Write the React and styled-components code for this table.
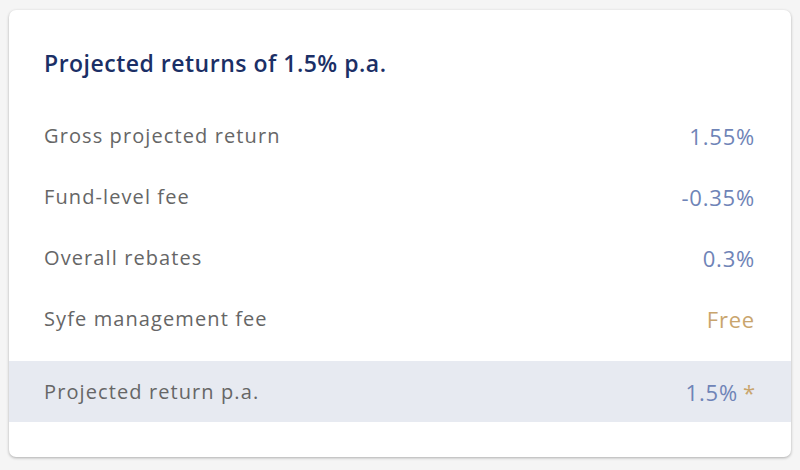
import styled, { createGlobalStyle } from "styled-components";

const GlobalStyle = createGlobalStyle`
  body {
    margin: 0;
    background: #f5f5f5;
    font-family: "Open Sans", "Liberation Sans", sans-serif;
  }
`;

const Page = styled.div`
  padding: 10px 9px 14px;
`;

const Card = styled.div`
  background: #ffffff;
  border-radius: 7px;
  box-shadow: 0 1px 3px rgba(0, 0, 0, 0.3);
  padding: 39px 0 35px;
`;

const Title = styled.h2`
  margin: 0 0 28px;
  padding: 0 35px;
  font-size: 23px;
  font-weight: 600;
  letter-spacing: 0.5px;
  line-height: 28px;
  color: #1b2f66;
`;

const Row = styled.div`
  display: flex;
  align-items: center;
  justify-content: space-between;
  height: 61px;
  padding: 0 36px 0 35px;
  background: ${(p) => (p.$highlight ? "#e7eaf1" : "transparent")};
  margin-top: ${(p) => (p.$highlight ? "12px" : "0")};
`;

const Label = styled.span`
  font-size: 20px;
  letter-spacing: 1.1px;
  color: #666666;
`;

const Value = styled.span`
  font-size: 22px;
  letter-spacing: 0.8px;
  color: ${(p) => (p.$gold ? "#c9a56d" : "#6f84b7")};
`;

const Star = styled.span`
  color: #c9a56d;
  margin-left: 5px;
  letter-spacing: 0;
`;

const rows = [
  { label: "Gross projected return", value: "1.55%" },
  { label: "Fund-level fee", value: "-0.35%" },
  { label: "Overall rebates", value: "0.3%" },
  { label: "Syfe management fee", value: "Free", gold: true },
];

const App = () => {
  return (
    <>
      <GlobalStyle />
      <Page>
        <Card>
          <Title>Projected returns of 1.5% p.a.</Title>
          {rows.map((r) => (
            <Row key={r.label}>
              <Label>{r.label}</Label>
              <Value $gold={r.gold}>{r.value}</Value>
            </Row>
          ))}
          <Row $highlight>
            <Label>Projected return p.a.</Label>
            <Value>
              1.5%<Star>*</Star>
            </Value>
          </Row>
        </Card>
      </Page>
    </>
  );
};

export default App;
